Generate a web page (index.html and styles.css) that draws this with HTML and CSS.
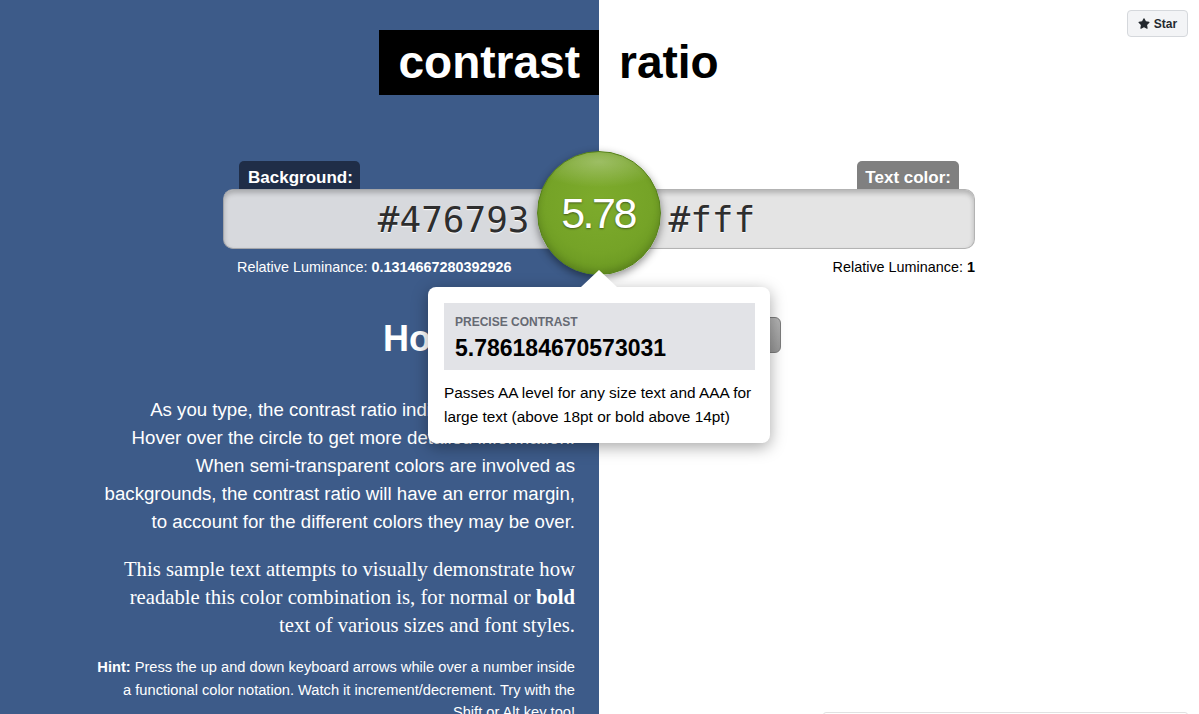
FILE: index.html
```html
<!DOCTYPE html>
<html lang="en">
<head>
<meta charset="utf-8">
<title>Contrast Ratio</title>
<link rel="stylesheet" href="styles.css">
</head>
<body>
<div class="page">
  <a class="star-btn" href="#">
    <svg class="star-icon" viewBox="0 0 16 16" width="12" height="12"><path d="M8 .25a.75.75 0 0 1 .673.418l1.882 3.815 4.21.612a.75.75 0 0 1 .416 1.279l-3.046 2.97.719 4.192a.751.751 0 0 1-1.088.791L8 12.347l-3.766 1.98a.75.75 0 0 1-1.088-.79l.72-4.194L.818 6.374a.75.75 0 0 1 .416-1.28l4.21-.611L7.327.668A.75.75 0 0 1 8 .25Z"/></svg>
    <span>Star</span>
  </a>

  <h1 class="title"><span class="title-left">contrast</span><span class="title-right">ratio</span></h1>

  <div class="picker">
    <div class="labels">
      <span class="tab tab-bg">Background:</span>
      <span class="tab tab-fg">Text color:</span>
    </div>
    <div class="inputs">
      <div class="field field-bg">#476793</div>
      <div class="field field-fg">#fff</div>
    </div>
    <div class="lum-row">
      <div class="lum lum-bg">Relative Luminance: <b>0.1314667280392926</b></div>
      <div class="lum lum-fg">Relative Luminance: <b>1</b></div>
    </div>

    <div class="ratio-circle"><span>5.78</span></div>

    <div class="tooltip">
      <div class="precise">
        <div class="precise-label">PRECISE CONTRAST</div>
        <div class="precise-value">5.786184670573031</div>
      </div>
      <p class="verdict">Passes AA level for any size text and AAA for<br>large text (above 18pt or bold above 14pt)</p>
    </div>
  </div>

  <div class="content">
    <div class="col col-left">
      <h2 class="how">How to use</h2>
      <p class="intro">As you type, the contrast ratio indicated will update.<br>Hover over the circle to get more detailed information.<br>When semi-transparent colors are involved as<br>backgrounds, the contrast ratio will have an error margin,<br>to account for the different colors they may be over.</p>
      <p class="sample">This sample text attempts to visually demonstrate how<br>readable this color combination is, for normal or <b>bold</b><br>text of various sizes and font styles.</p>
      <p class="hint"><b>Hint:</b> Press the up and down keyboard arrows while over a number inside<br>a functional color notation. Watch it increment/decrement. Try with the<br>Shift or Alt key too!</p>
    </div>
    <div class="col col-right">
      <div class="swap-block"></div>
    </div>
  </div>

  <div class="ad-box"></div>
</div>
</body>
</html>
```

FILE: styles.css
```css
* { box-sizing: border-box; }

html, body {
  margin: 0;
  padding: 0;
}

body {
  font-family: "Liberation Sans", Arial, sans-serif;
  color: #fff;
  background: #fff;
}

.page {
  position: relative;
  min-height: 714px;
  height: 714px;
  overflow: hidden;
  padding-top: 30px;
  background: linear-gradient(to right, #3d5b89 0, #3d5b89 599px, #fff 599px);
}

/* Star button */
.star-btn {
  position: absolute;
  top: 10px;
  right: 11px;
  width: 61px;
  height: 27px;
  display: flex;
  align-items: center;
  justify-content: center;
  gap: 4px;
  background: #f3f4f6;
  border: 1px solid #d5d8dc;
  border-radius: 4px;
  color: #24292f;
  font-size: 12px;
  font-weight: bold;
  text-decoration: none;
}
.star-icon { fill: #24292f; display: block; }

/* Title */
.title {
  margin: 0;
  display: grid;
  grid-template-columns: 599px 1fr;
  font-size: 46px;
  font-weight: bold;
  height: 65px;
  line-height: 65px;
}
.title-left {
  justify-self: end;
  background: #000;
  color: #fff;
  padding: 0 19px 0 20px;
}
.title-right {
  color: #000;
  padding-left: 20px;
}

/* Picker */
.picker {
  position: relative;
  width: 752px;
  margin: 66px 0 0 223px;
}
.labels {
  display: flex;
  justify-content: space-between;
  padding: 0 16px;
  height: 28px;
}
.tab {
  font-size: 17px;
  font-weight: bold;
  line-height: 23px;
  height: 28px;
  padding: 5px 8px 0 9px;
  border-radius: 5px 5px 0 0;
  color: #fff;
}
.tab-bg { background: #1f2d47; padding-right: 7px; }
.tab-fg { background: #808080; padding: 5px 8px 0 8px; }

.inputs {
  display: flex;
  height: 60px;
}
.field {
  flex: 1;
  font-family: "DejaVu Sans Mono", "Liberation Mono", monospace;
  font-size: 36px;
  line-height: 60px;
  color: #2e2e2e;
  text-shadow: 0 1px 1px #fff;
  border: 1px solid #a4a6aa;
  box-shadow: inset 0 3px 5px rgba(0, 0, 0, .22);
}
.field-bg {
  background: #d7d9dd;
  border-right: 0;
  border-radius: 10px 0 0 10px;
  text-align: right;
  padding-right: 72px;
}
.field-fg {
  background: #e4e4e4;
  border-left: 0;
  border-radius: 0 10px 10px 0;
  padding-left: 67px;
  border-color: #b3b3b3;
}

.lum-row {
  display: flex;
  justify-content: space-between;
  margin-top: 8px;
  font-size: 14.4px;
  line-height: 20px;
}
.lum-bg { color: #fff; padding-left: 14px; }
.lum-fg { color: #000; }

/* Ratio circle */
.ratio-circle {
  position: absolute;
  left: 314px;
  top: -10px;
  width: 124px;
  height: 124px;
  border-radius: 50%;
  background:
    radial-gradient(ellipse 80% 30% at 50% 8%, rgba(255,255,255,.28), rgba(255,255,255,0) 70%),
    radial-gradient(circle at 50% 40%, #7dab2c 0, #75a327 55%, #5f8d1c 100%);
  border: 1px solid #55801a;
  box-shadow: 0 3px 8px rgba(0, 0, 0, .45), inset 0 -3px 6px rgba(0,0,0,.15);
  display: flex;
  align-items: center;
  justify-content: center;
}
.ratio-circle span {
  font-size: 43px;
  letter-spacing: -2.5px;
  color: #fff;
  text-shadow: 0 1px 2px rgba(0, 0, 0, .45);
  margin-top: 0;
  margin-left: -2px;
}

/* Tooltip */
.tooltip {
  position: absolute;
  left: 205px;
  top: 126px;
  width: 342px;
  height: 156px;
  background: #fff;
  border-radius: 8px;
  padding: 16px 15px 0 16px;
  color: #000;
  box-shadow: 0 4px 16px rgba(0, 0, 0, .35);
  z-index: 2;
}
.tooltip::before {
  content: "";
  position: absolute;
  left: 153px;
  top: -17px;
  width: 0;
  height: 0;
  border-left: 18px solid transparent;
  border-right: 18px solid transparent;
  border-bottom: 17px solid #fff;
}
.precise {
  background: #e2e3e7;
  height: 67px;
  padding: 11px 11px 0 11px;
}
.precise-label {
  font-size: 12px;
  font-weight: bold;
  line-height: 16px;
  color: #666a73;
}
.precise-value {
  margin-top: 3px;
  font-size: 23px;
  font-weight: bold;
  line-height: 30px;
  color: #000;
}
.verdict {
  margin: 11px 0 0 0;
  font-size: 15.4px;
  line-height: 24px;
  color: #000;
  white-space: nowrap;
}

/* Content */
.content {
  display: grid;
  grid-template-columns: 599px 1fr;
  margin-top: 40px;
}
.col-left {
  text-align: right;
  padding-right: 24px;
}
.col-right {
  padding-left: 24px;
}
.how {
  margin: 0;
  font-size: 36px;
  line-height: 44px;
  font-weight: bold;
  color: #fff;
}
.intro {
  margin: 35px 0 0 0;
  font-size: 18.65px;
  line-height: 28px;
}
.sample {
  margin: 19px 0 0 0;
  font-family: "Liberation Serif", "Times New Roman", serif;
  font-size: 20.7px;
  line-height: 28px;
}
.hint {
  margin: 17px 0 0 0;
  font-size: 14.65px;
  line-height: 22.5px;
}

.swap-block {
  width: 158px;
  height: 36px;
  border-radius: 6px;
  background: linear-gradient(to bottom, #b4b4b4, #989898);
  border: 1px solid #7c7c7c;
}

.ad-box {
  position: absolute;
  left: 823px;
  top: 712px;
  width: 365px;
  height: 120px;
  border: 1px solid #e1e1e1;
  border-radius: 3px;
  background: #fff;
}
```
